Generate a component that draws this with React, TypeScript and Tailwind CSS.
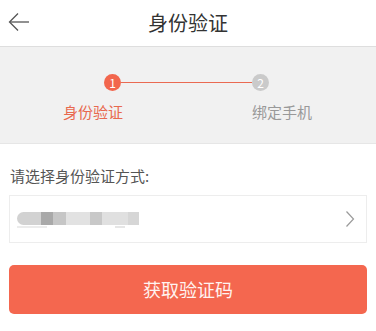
const blurBlocks = [
  { w: 24, c: 'bg-[#d2d2d2] rounded-l-full' },
  { w: 12, c: 'bg-[#a9a9a9]' },
  { w: 13, c: 'bg-[#c6c6c6]' },
  { w: 24, c: 'bg-[#e2e2e2]' },
  { w: 12, c: 'bg-[#c8c8c8]' },
  { w: 26, c: 'bg-[#e0e0e0]' },
  { w: 11, c: 'bg-[#d6d6d6]' },
];

const BackArrow = () => (
  <svg width="22" height="22" viewBox="0 0 22 22" fill="none" stroke="#555" strokeWidth="1.3">
    <path d="M21 11H2" />
    <path d="M10 2.5L1.5 11L10 19.5" />
  </svg>
);

const Chevron = () => (
  <svg width="10" height="18" viewBox="0 0 10 18" fill="none" stroke="#9a9a9a" strokeWidth="1.2">
    <path d="M1.5 1.5L8.5 9L1.5 16.5" />
  </svg>
);

export default function App() {
  return (
    <div className="w-[376px] h-[331px] bg-white overflow-hidden font-['Noto_Sans_CJK_SC',sans-serif]">
      {/* 顶部导航 */}
      <div className="relative h-[47px] flex items-center justify-center border-b border-[#dedede]">
        <div className="absolute left-[8px] top-[11px]">
          <BackArrow />
        </div>
        <span className="text-[20px] text-[#333] leading-none">身份验证</span>
      </div>

      {/* 步骤条 */}
      <div className="h-[97px] bg-[#f1f1f1] border-b border-[#e6e6e6]">
        <div className="flex items-center pt-[27px] pl-[104px]">
          <div className="w-[17px] h-[17px] rounded-full bg-[#f2664d] text-white text-[12px] leading-none flex items-center justify-center">1</div>
          <div className="w-[131px] h-[1.5px] bg-[#ea6a52]" />
          <div className="w-[17px] h-[17px] rounded-full bg-[#cacaca] text-white text-[12px] leading-none flex items-center justify-center">2</div>
        </div>
        <div className="flex pt-[11px] pl-[63px] text-[15px] leading-[20px]">
          <span className="text-[#e8694f]">身份验证</span>
          <span className="ml-[129px] text-[#999]">绑定手机</span>
        </div>
      </div>

      {/* 验证方式 */}
      <div className="px-[9px] pt-[22px]">
        <div className="pl-[1px] text-[15px] leading-[20px] text-[#555]">请选择身份验证方式:</div>
        <div className="mt-[9px] h-[48px] border border-[#ededed] flex items-center justify-between pl-[7px] pr-[11px]">
          <div className="flex flex-col pt-[2px] blur-[0.6px]">
            <div className="flex h-[13px]">
              {blurBlocks.map((b, i) => (
                <div key={i} className={b.c} style={{ width: b.w }} />
              ))}
            </div>
            <div className="flex mt-[1px] gap-[68px]">
              <div className="w-[30px] h-[2px] bg-[#ececec]" />
              <div className="w-[10px] h-[2px] bg-[#e6e6e6]" />
            </div>
          </div>
          <Chevron />
        </div>
        <button className="mt-[22px] w-full h-[49px] rounded-[5px] bg-[#f4674f] text-[18px] text-[#fff3f0] flex items-center justify-center">
          获取验证码
        </button>
      </div>
    </div>
  );
}
